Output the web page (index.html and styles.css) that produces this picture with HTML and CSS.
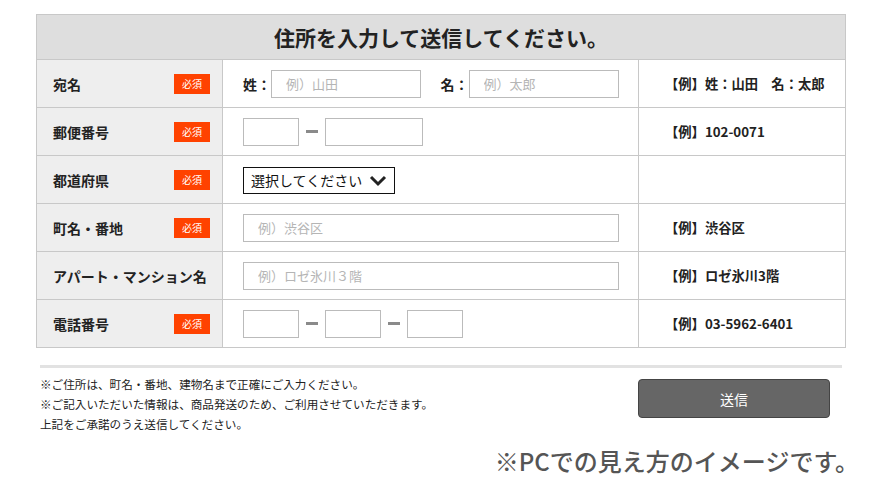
FILE: index.html
```html
<!DOCTYPE html>
<html lang="ja">
  <head>
    <meta charset="UTF-8" />
    <meta name="viewport" content="width=device-width, initial-scale=1.0" />
    <title>住所入力フォーム</title>
    <link rel="stylesheet" href="styles.css">
  </head>
  <body>
    <div class="page">
      <table class="form-table">
        <tr>
          <th colspan="3" class="form-title">住所を入力して送信してください。</th>
        </tr>
        <tr>
          <td class="label"><div class="label-inner">宛名<span class="req">必須</span></div></td>
          <td class="field">
            <span class="pre">姓：</span><input type="text" class="w150" placeholder="例）山田">
            <span class="pre second">名：</span><input type="text" class="w150" placeholder="例）太郎">
          </td>
          <td class="example">【例】姓：山田　名：太郎</td>
        </tr>
        <tr>
          <td class="label"><div class="label-inner">郵便番号<span class="req">必須</span></div></td>
          <td class="field">
            <input type="text" class="w56"><span class="dash"></span><input type="text" class="w98">
          </td>
          <td class="example">【例】102-0071</td>
        </tr>
        <tr>
          <td class="label"><div class="label-inner">都道府県<span class="req">必須</span></div></td>
          <td class="field">
            <div class="select-wrap">
              <select>
                <option>選択してください</option>
              </select>
              <svg class="chevron" width="18" height="12" viewBox="0 0 18 12">
                <path d="M2 2 L9 9 L16 2" fill="none" stroke="#222" stroke-width="3" />
              </svg>
            </div>
          </td>
          <td class="example"></td>
        </tr>
        <tr>
          <td class="label"><div class="label-inner">町名・番地<span class="req">必須</span></div></td>
          <td class="field"><input type="text" class="w376" placeholder="例）渋谷区"></td>
          <td class="example">【例】渋谷区</td>
        </tr>
        <tr>
          <td class="label"><div class="label-inner">アパート・マンション名</div></td>
          <td class="field"><input type="text" class="w376" placeholder="例）ロゼ氷川３階"></td>
          <td class="example">【例】ロゼ氷川3階</td>
        </tr>
        <tr>
          <td class="label"><div class="label-inner">電話番号<span class="req">必須</span></div></td>
          <td class="field">
            <input type="text" class="w56"><span class="dash"></span><input type="text" class="w56"><span class="dash"></span><input type="text" class="w56">
          </td>
          <td class="example">【例】03-5962-6401</td>
        </tr>
      </table>

      <div class="bottom">
        <div class="notes">
          <p>※ご住所は、町名・番地、建物名まで正確にご入力ください。</p>
          <p>※ご記入いただいた情報は、商品発送のため、ご利用させていただきます。</p>
          <p>上記をご承諾のうえ送信してください。</p>
        </div>
        <button class="send">送信</button>
      </div>

      <div class="caption">※PCでの見え方のイメージです。</div>
    </div>
  </body>
</html>
```

FILE: styles.css
```css
body {
  margin: 0;
  font-family: "Noto Sans CJK JP", "Noto Sans", sans-serif;
  color: #222;
  background-color: #fff;
}

.page {
  width: 810px;
  padding: 14px 0 0 36px;
}

.form-table {
  width: 810px;
  border-collapse: collapse;
  border: 1px solid #c8c8c8;
}

.form-table td,
.form-table th {
  border: 1px solid #c8c8c8;
  padding: 0;
}

.form-title {
  height: 44px;
  background-color: #dedede;
  font-size: 21px;
  font-weight: bold;
  text-align: center;
  line-height: 40px;
}

.label {
  width: 185px;
  height: 47px;
  background-color: #eee;
  font-size: 14px;
  font-weight: bold;
}

.label-inner {
  display: flex;
  align-items: center;
  justify-content: space-between;
  padding: 0 12px 0 16px;
}

.req {
  display: inline-block;
  width: 36px;
  height: 20px;
  line-height: 20px;
  background-color: #ff4200;
  color: #fff;
  font-size: 10px;
  font-weight: normal;
  text-align: center;
}

.field {
  width: 395px;
  padding-left: 20px !important;
}

.pre {
  font-size: 14px;
  font-weight: bold;
  vertical-align: middle;
}

.pre.second {
  margin-left: 16px;
}

input {
  box-sizing: border-box;
  height: 28px;
  border: 1px solid #bbb;
  padding: 0 14px;
  font-family: inherit;
  font-size: 13px;
  vertical-align: middle;
}

input::placeholder {
  color: #b5b5b5;
}

.w150 { width: 150px; }
.w56 { width: 56px; }
.w98 { width: 98px; }
.w376 { width: 376px; }

.dash {
  display: inline-block;
  width: 12px;
  height: 3px;
  margin: 0 7px;
  background-color: #8a8a8a;
  vertical-align: middle;
}

.select-wrap {
  position: relative;
  display: inline-block;
  vertical-align: middle;
}

.select-wrap select {
  appearance: none;
  -webkit-appearance: none;
  box-sizing: border-box;
  width: 152px;
  height: 27px;
  border: 1px solid #111;
  border-radius: 0;
  background: #fff;
  padding: 0 0 0 7px;
  font-family: inherit;
  font-size: 14px;
  color: #111;
}

.chevron {
  position: absolute;
  right: 8px;
  top: 8px;
  pointer-events: none;
}

.example {
  padding-left: 26px !important;
  font-size: 13.3px;
  font-weight: bold;
}

.bottom {
  display: flex;
  justify-content: space-between;
  align-items: flex-start;
  margin: 17px 4px 0 4px;
  padding-top: 6px;
  border-top: 3px solid #e2e2e2;
}

.notes p {
  margin: 0;
  font-size: 11.6px;
  line-height: 20px;
  color: #222;
}

.send {
  width: 192px;
  height: 39px;
  margin: 5px 12px 0 0;
  background-color: #666;
  border: 1px solid #444;
  border-radius: 4px;
  color: #fff;
  font-family: inherit;
  font-size: 14px;
  cursor: pointer;
}

.caption {
  margin-top: 9px;
  margin-right: -13px;
  text-align: right;
  font-size: 24px;
  font-weight: 500;
  color: #555;
}
```
